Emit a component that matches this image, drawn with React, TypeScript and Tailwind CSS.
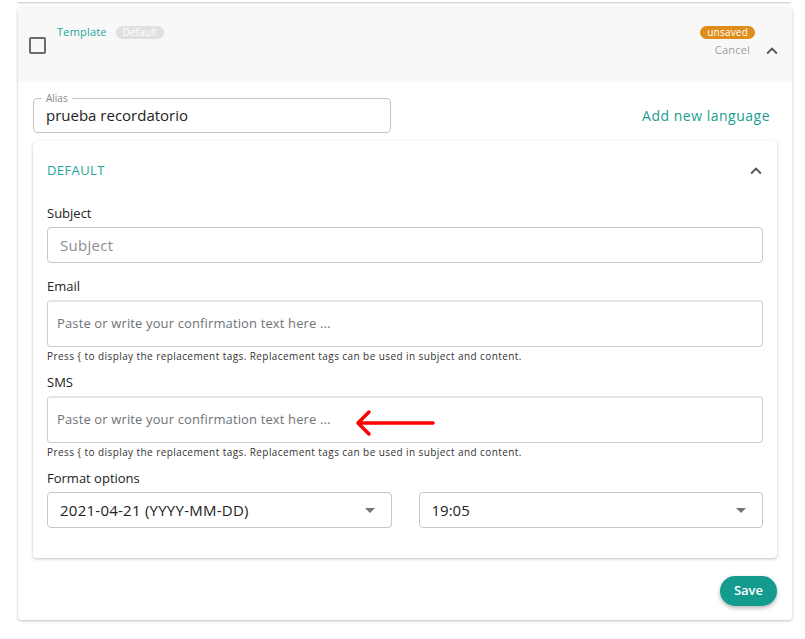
import React from "react";

const ChevronUp = ({ className }: { className?: string }) => (
    <svg viewBox="0 0 24 24" className={className} fill="currentColor">
        <path d="M7.41 15.41 12 10.83l4.59 4.58L18 14l-6-6-6 6z" />
    </svg>
);

const Caret = () => (
    <svg viewBox="0 0 24 24" className="w-6 h-6 text-[#757575]" fill="currentColor">
        <path d="M7 10l5 5 5-5z" />
    </svg>
);

const helper =
    "Press { to display the replacement tags. Replacement tags can be used in subject and content.";

const App: React.FC = () => {
    return (
        <div className="w-[805px] h-[639px] bg-white overflow-hidden font-['Open_Sans',sans-serif] text-[#212121]">
            {/* previous card edge */}
            <div className="mx-[18px] h-[2px] bg-white shadow-[0_1px_2px_rgba(0,0,0,0.25)] mr-[14px]" />

            <div className="ml-[18px] mr-[13px] mt-[5px] bg-white rounded shadow-[0_1px_3px_rgba(0,0,0,0.25)]">
                {/* header */}
                <div className="h-[75px] bg-[#f8f8f8] rounded-t flex pl-[11px] pr-[9px]">
                    <div className="pt-[30px]">
                        <div className="w-[17px] h-[17px] border-2 border-[#6b6b6b] rounded-[2px]" />
                    </div>
                    <div className="pl-[11px] pt-[18px] flex items-start gap-[9px] flex-1">
                        <span className="text-[11px] text-[#26a69a] leading-[14px] tracking-[0.2px]">Template</span>
                        <span className="text-[10px] text-white bg-[#e0e0e0] rounded-full px-[7px] leading-[13px] mt-[1px]">
                            Default
                        </span>
                    </div>
                    <div className="pt-[19px] flex flex-col items-end">
                        <span className="text-[10px] text-white bg-[#df8d1c] rounded-full px-[7px] leading-[13px] tracking-[0.2px]">
                            unsaved
                        </span>
                        <span className="text-[11px] text-[#9e9e9e] mt-[3px] mr-[5px] tracking-[0.2px]">Cancel</span>
                    </div>
                    <div className="pt-[33px] pl-[6px]">
                        <ChevronUp className="w-[22px] h-[22px] text-[#555]" />
                    </div>
                </div>

                {/* body */}
                <div className="px-[15px] pb-[14px]">
                    <div className="flex items-center pt-[16px]">
                        <div className="relative w-[358px] h-[35px] border border-[#c4c4c4] rounded">
                            <span className="absolute -top-[8px] left-[8px] bg-white px-[4px] text-[10px] text-[#8a8a8a] leading-[14px]">
                                Alias
                            </span>
                            <div className="pl-[12px] pt-[5px] text-[15px] text-[#222]">prueba recordatorio</div>
                        </div>
                        <div className="flex-1 text-right pr-[7px] text-[14px] text-[#1a9e90] font-medium tracking-[0.5px]">
                            Add new language
                        </div>
                    </div>

                    {/* inner card */}
                    <div className="mt-[8px] bg-white rounded shadow-[0_1px_3px_rgba(0,0,0,0.25)] px-[14px] pb-[30px]">
                        <div className="h-[60px] flex items-center justify-between">
                            <span className="text-[13px] text-[#26a69a] tracking-[0.4px]">DEFAULT</span>
                            <ChevronUp className="w-[22px] h-[22px] text-[#555] -mr-[4px]" />
                        </div>

                        <div className="text-[13px] text-[#222] leading-[16px] mt-[4px]">Subject</div>
                        <div className="mt-[6px] h-[36px] border border-[#c8c8c8] rounded flex items-center pl-[12px] text-[15px] text-[#8e8e8e] tracking-[0.3px]">
                            Subject
                        </div>

                        <div className="text-[13px] text-[#222] leading-[16px] mt-[15px]">Email</div>
                        <div className="mt-[6px] h-[47px] border border-[#cfcfcf] border-t-2 border-t-[#e4e4e4] rounded flex items-center pl-[9px] text-[13px] text-[#6f7378] tracking-[0.13px]">
                            Paste or write your confirmation text here ...
                        </div>
                        <div className="mt-[2px] text-[10px] text-[#333] leading-[14px] tracking-[0.42px]">{helper}</div>

                        <div className="text-[13px] text-[#222] leading-[16px] mt-[11px]">SMS</div>
                        <div className="relative mt-[6px] h-[47px] border border-[#cfcfcf] border-t-2 border-t-[#e4e4e4] rounded flex items-center pl-[9px] text-[13px] text-[#6f7378] tracking-[0.13px]">
                            Paste or write your confirmation text here ...
                            <svg
                                className="absolute left-[306px] top-[10px]"
                                width="82"
                                height="30"
                                viewBox="0 0 82 30"
                            >
                                <path
                                    d="M79 15 H4 M15 4 L4 15 L15 26"
                                    stroke="#ff0000"
                                    strokeWidth="3.5"
                                    strokeLinecap="round"
                                    strokeLinejoin="round"
                                    fill="none"
                                />
                            </svg>
                        </div>
                        <div className="mt-[2px] text-[10px] text-[#333] leading-[14px] tracking-[0.42px]">{helper}</div>

                        <div className="text-[13px] text-[#222] leading-[16px] mt-[11px]">Format options</div>
                        <div className="mt-[6px] flex gap-[27px]">
                            <div className="flex-1 h-[36px] border border-[#c8c8c8] rounded flex items-center justify-between pl-[12px] pr-[9px] text-[15px] text-[#222] tracking-[0.25px]">
                                <span>2021-04-21 (YYYY-MM-DD)</span>
                                <Caret />
                            </div>
                            <div className="flex-1 h-[36px] border border-[#c8c8c8] rounded flex items-center justify-between pl-[12px] pr-[9px] text-[15px] text-[#222]">
                                <span>19:05</span>
                                <Caret />
                            </div>
                        </div>
                    </div>

                    <div className="flex justify-end mt-[18px]">
                        <button className="h-[30px] px-[14px] rounded-full bg-[#139c8d] text-white text-[13px] font-semibold shadow-[0_2px_4px_rgba(0,0,0,0.3)]">
                            Save
                        </button>
                    </div>
                </div>
            </div>
        </div>
    );
};

export default App;
